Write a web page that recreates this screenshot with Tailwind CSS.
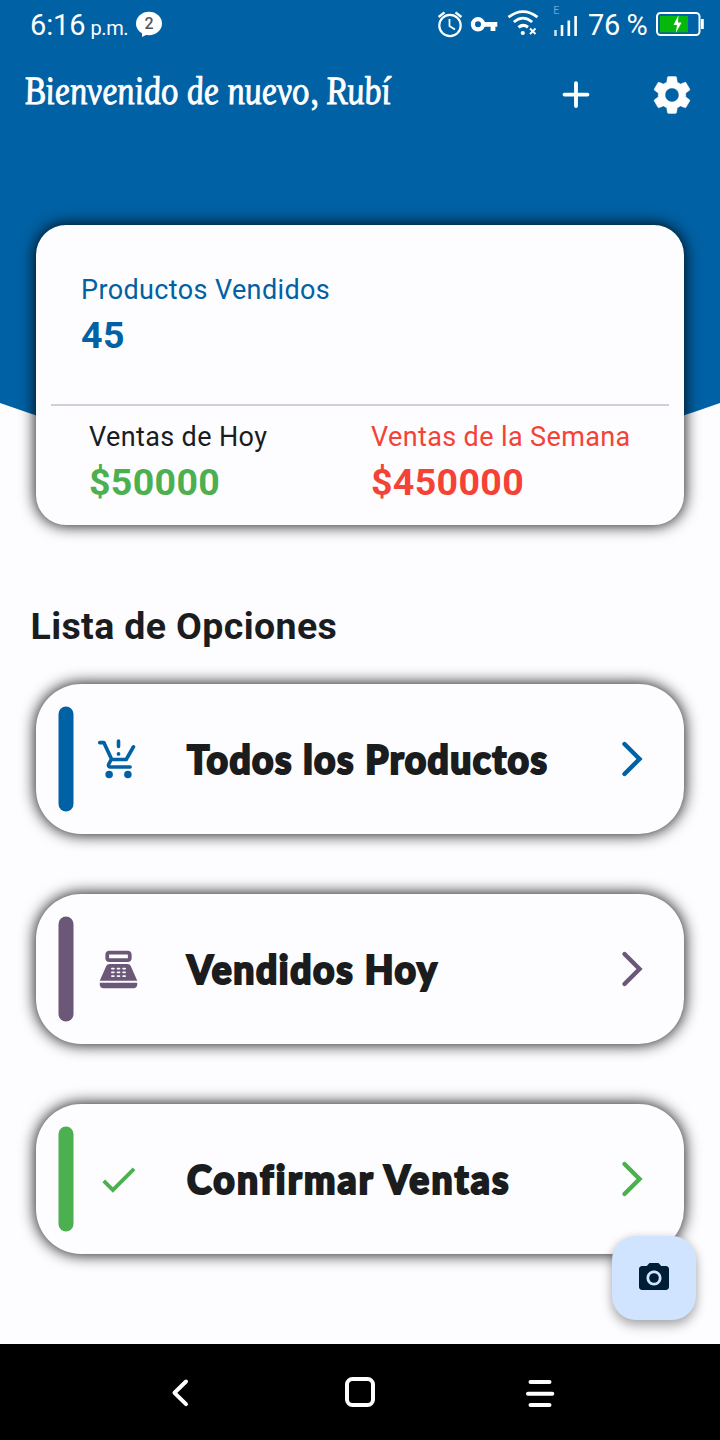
<!DOCTYPE html>
<html lang="es">
<head>
<meta charset="utf-8">
<title>Inicio</title>
<script src="https://cdn.jsdelivr.net/npm/@tailwindcss/browser@4"></script>
</head>
<body class="w-[720px] h-[1440px] overflow-hidden bg-[#fdfcff] text-[#1a1c1e] font-[Roboto,sans-serif]">
<div class="relative w-[720px] h-[1440px] flex flex-col isolate">
  <svg class="absolute left-0 top-0 -z-10" width="720" height="480" viewBox="0 0 720 480"><path d="M0 0H720V403Q360 533 0 403Z" fill="#0061a4"/></svg>

  <!-- Status bar -->
  <div class="h-12 flex items-center text-white whitespace-nowrap pl-[30px]">
    <div class="w-[105px] flex items-baseline leading-8 pt-[5px]"><span class="text-[29px] tracking-[-0.1px]">6:16</span><span class="text-[20px] ml-[5px] tracking-[-0.4px]">p.m.</span></div>
    <svg width="28" height="28" viewBox="0 0 28 28" class="shrink-0"><ellipse cx="14" cy="13.5" rx="13" ry="11.8" fill="#fff"/><path d="M7 20V27L15 23Z" fill="#fff"/><text x="14" y="19" text-anchor="middle" font-family="Roboto" font-weight="500" font-size="16" fill="#555">2</text></svg>
    <svg width="150" height="48" viewBox="436 0 150 48" class="shrink-0 ml-[273px]" fill="none" stroke="#fff">
      <circle cx="450" cy="25.5" r="10.7" stroke-width="2.2"/><path d="M449.5 19V26L455 29.5" stroke-width="1.8"/><path d="M438.6 17L444.5 12.4M461.4 17L455.5 12.4" stroke-width="2.4"/>
      <circle cx="478" cy="24.3" r="5.1" stroke-width="4.2"/><path d="M484 24.3H497.3M493 24V31" stroke-width="4.8"/>
      <path d="M508.5 17.2Q523 6 537.5 17.2" stroke-width="2.8"/><path d="M513.8 22Q523 14.2 532.2 22" stroke-width="2.8"/><path d="M518.5 27.4Q523 23.6 528 27.2" stroke-width="3.2"/><circle cx="522.8" cy="33" r="2.1" fill="#fff" stroke="none"/><path d="M530 28.5L535.5 34M535.5 28.5L530 34" stroke-width="1.9"/>
      <path d="M555.5 36V30" stroke-width="2.6" stroke-opacity=".8"/><path d="M562 36V25M568.8 36V20.5M575.6 36V16" stroke-width="2.6"/>
      <text x="553.3" y="14" font-family="Roboto" font-size="10.5" fill="#6fa4cd" stroke="none">E</text>
    </svg>
    <span class="text-[29px] leading-8 w-[69px] pt-[2px] ml-[2px] tracking-[-0.4px]">76 %</span>
    <svg width="50" height="26" viewBox="655 11 50 26" class="shrink-0 -ml-[2px]"><rect x="657" y="13" width="42.5" height="22" rx="3.5" fill="none" stroke="#fff" stroke-width="2"/><rect x="660" y="16" width="28" height="16.3" fill="#07b80c"/><path d="M701 19H703.8V29H701Z" fill="#fff"/><path d="M678.5 15L673.5 25H677L675.8 33L681.6 22.5H678Z" fill="#fff"/></svg>
  </div>

  <!-- App bar -->
  <header class="h-[93px] flex items-center text-white pl-6 pr-[25px]">
    <h1 class="w-[529px] h-[93px] pt-[19px] text-[40px] leading-[48px] whitespace-nowrap italic font-['Liberation_Serif',serif]"><span class="inline-block origin-left skew-x-8 scale-x-[0.855] [-webkit-text-stroke:0.9px_white]">Bienvenido de nuevo, Rubí</span></h1>
    <svg width="46" height="46" viewBox="0 0 24 24" class="shrink-0"><path d="M12 5.800V17.800M6 11.800H18" stroke="#fff" stroke-width="2" stroke-linecap="round"/></svg>
    <svg width="46" height="46" viewBox="0 0 24 24" class="shrink-0 ml-[50px]" fill="#fff" stroke="#fff" stroke-width=".2"><path d="M19.14 12.94c.04-.3.06-.61.06-.94 0-.32-.02-.64-.07-.94l2.03-1.58c.18-.14.23-.41.12-.61l-1.92-3.32c-.12-.22-.37-.29-.59-.22l-2.39.96c-.5-.38-1.03-.7-1.62-.94l-.36-2.54c-.04-.24-.24-.41-.48-.41h-3.84c-.24 0-.43.17-.47.41l-.36 2.54c-.59.24-1.13.57-1.62.94l-2.39-.96c-.22-.08-.47 0-.59.22L2.74 8.87c-.12.21-.08.47.12.61l2.03 1.58c-.05.3-.09.63-.09.94s.02.64.07.94l-2.03 1.58c-.18.14-.23.41-.12.61l1.92 3.32c.12.22.37.29.59.22l2.39-.96c.5.38 1.03.7 1.62.94l.36 2.54c.05.24.24.41.48.41h3.84c.24 0 .44-.17.47-.41l.36-2.54c.59-.24 1.13-.56 1.62-.94l2.39.96c.22.08.47 0 .59-.22l1.92-3.32c.12-.22.07-.47-.12-.61l-2.01-1.58zM12 15.6c-1.98 0-3.6-1.62-3.6-3.6s1.62-3.6 3.6-3.6 3.6 1.62 3.6 3.6-1.62 3.6-3.6 3.6z"/></svg>
  </header>

  <!-- Sales summary -->
  <section class="mt-[84px] mx-9 h-[300px] rounded-[30px] bg-[#fdfcff] shadow-[0_0_16px_#000] flex flex-col whitespace-nowrap">
    <div class="h-[179px] pt-[49px] pl-[45px] text-[#0061a4]">
      <p class="text-[27px] leading-8 tracking-[0.375px]">Productos Vendidos</p>
      <p class="text-[37.5px] leading-[44px] mt-[7px] font-bold tracking-[0.375px]">45</p>
    </div>
    <div class="mx-[15px] h-[2px] bg-[#ced1d7]"></div>
    <div class="flex pl-[53px] pt-[15px]">
      <div class="w-[282px]">
        <p class="text-[27px] leading-8 tracking-[0.375px]">Ventas de Hoy</p>
        <p class="text-[37.5px] leading-[44px] mt-[7px] font-bold tracking-[0.35px] text-[#4caf50]">$50000</p>
      </div>
      <div class="text-[#f44336]">
        <p class="text-[27px] leading-8 tracking-[0.375px]">Ventas de la Semana</p>
        <p class="text-[37.5px] leading-[44px] mt-[7px] font-bold tracking-[0.35px]">$450000</p>
      </div>
    </div>
  </section>

  <h2 class="mt-[79px] ml-[30.5px] h-[80px] text-[37.5px] leading-[44px] font-bold tracking-[0.375px]">Lista de Opciones</h2>

  <!-- Options -->
  <main class="mx-9 flex flex-col gap-[60px]">
    <a class="h-[150px] rounded-[45px] bg-[#fdfcff] shadow-[0_0_16px_#000] flex items-center pl-[22.4px]">
      <svg width="16" height="106" viewBox="0 0 16 106"><rect x=".5" y=".5" width="15" height="105" rx="7.5" fill="#0061a4"/></svg>
      <svg width="45" height="45" viewBox="0 0 24 24" class="ml-[21.500px]" fill="none" stroke="#0061a4" stroke-width="1.9" stroke-linecap="round" stroke-linejoin="round"><path d="M2 3H4.2L8.4 12H16.1L20 5.2M8.1 12L6.8 14.5C6.4 15.3 6.9 16 7.8 16H18.2M12 2.1V5"/><circle cx="12" cy="9" r="1" fill="#0061a4" stroke="none"/><circle cx="7" cy="20" r="2" fill="#0061a4" stroke="none"/><circle cx="17" cy="20" r="2" fill="#0061a4" stroke="none"/></svg>
      <span class="ml-[46px] w-[432px] origin-left scale-x-[0.93] font-[Lato,sans-serif] font-black text-[40px] leading-[50px] whitespace-nowrap tracking-[1.55px] [-webkit-text-stroke:2.2px_#1a1c1e]">Todos los Productos</span>
      <svg width="24" height="40" viewBox="0 0 24 40" fill="none" stroke="#0061a4" stroke-width="4.4" stroke-linecap="round"><path d="M5.500 5L20.500 20L5.500 35"/></svg>
    </a>
    <a class="h-[150px] rounded-[45px] bg-[#fdfcff] shadow-[0_0_16px_#000] flex items-center pl-[22.4px]">
      <svg width="16" height="106" viewBox="0 0 16 106"><rect x=".5" y=".5" width="15" height="105" rx="7.5" fill="#6b5778"/></svg>
      <svg width="45" height="45" viewBox="0 0 24 24" class="ml-[21.500px]" fill="#6b5778"><path fill-rule="evenodd" d="M17 2H7C5.900 2 5 2.900 5 4V6C5 7.100 5.900 8 7 8H17C18.100 8 19 7.100 19 6V4C19 2.900 18.100 2 17 2ZM17 6H7V4H17ZM20 22H4C2.900 22 2 21.100 2 20V19H22V20C22 21.100 21.100 22 20 22ZM18.530 10.190C18.210 9.470 17.490 9 16.700 9H7.300C6.510 9 5.790 9.470 5.470 10.190L2 18H22Z"/><path stroke="#fdfcff" stroke-width="1" stroke-linecap="round" d="M8.500 11.500H9.500M8.500 13.500H9.500M8.500 15.500H9.500M11.500 11.500H12.500M11.500 13.500H12.500M11.500 15.500H12.500M14.500 11.500H15.500M14.500 13.500H15.500M14.500 15.500H15.500"/></svg>
      <span class="ml-[46px] w-[432px] origin-left scale-x-[0.93] font-[Lato,sans-serif] font-black text-[40px] leading-[50px] whitespace-nowrap tracking-[1.75px] [-webkit-text-stroke:2.2px_#1a1c1e]">Vendidos Hoy</span>
      <svg width="24" height="40" viewBox="0 0 24 40" fill="none" stroke="#6b5778" stroke-width="4.4" stroke-linecap="round"><path d="M5.500 5L20.500 20L5.500 35"/></svg>
    </a>
    <a class="h-[150px] rounded-[45px] bg-[#fdfcff] shadow-[0_0_16px_#000] flex items-center pl-[22.4px]">
      <svg width="16" height="106" viewBox="0 0 16 106"><rect x=".5" y=".5" width="15" height="105" rx="7.5" fill="#4caf50"/></svg>
      <svg width="45" height="45" viewBox="0 0 24 24" class="ml-[21.500px]" fill="#4caf50"><path d="M9 16.170L4.830 12l-1.420 1.410L9 19 21 7l-1.410-1.410z"/></svg>
      <span class="ml-[46px] w-[432px] origin-left scale-x-[0.93] font-[Lato,sans-serif] font-black text-[40px] leading-[50px] whitespace-nowrap tracking-[2.4px] [-webkit-text-stroke:2.2px_#1a1c1e]">Confirmar Ventas</span>
      <svg width="24" height="40" viewBox="0 0 24 40" fill="none" stroke="#4caf50" stroke-width="4.4" stroke-linecap="round"><path d="M5.500 5L20.500 20L5.500 35"/></svg>
    </a>
  </main>

  <!-- Camera button -->
  <button class="absolute left-[612px] top-[1236px] w-[84px] h-[84px] rounded-3xl bg-[#d1e4ff] flex items-center justify-center shadow-[0_6px_12px_rgba(0,0,0,0.28),0_1px_8px_rgba(0,0,0,0.12)]">
    <svg width="36" height="36" viewBox="0 0 24 24" fill="#001d36"><circle cx="12" cy="12" r="3.200"/><path d="M9 2L7.170 4H4c-1.100 0-2 .9-2 2v12c0 1.100.9 2 2 2h16c1.100 0 2-.9 2-2V6c0-1.100-.9-2-2-2h-3.170L15 2H9zm3 15c-2.760 0-5-2.240-5-5s2.240-5 5-5 5 2.240 5 5-2.240 5-5 5z"/></svg>
  </button>

  <!-- System navigation -->
  <nav class="mt-auto h-24 bg-black">
    <svg width="720" height="96" viewBox="0 1344 720 96" fill="none" stroke="#fff" stroke-width="4" stroke-linecap="round" stroke-linejoin="round"><path d="M186 1381.500L174.500 1392.800L186 1404.200"/><rect x="347" y="1379" width="26" height="26" rx="5.500"/><path d="M530.500 1382H549.500M528 1393.700H552.300M530.500 1405H549.500"/></svg>
  </nav>
</div>
</body>
</html>
